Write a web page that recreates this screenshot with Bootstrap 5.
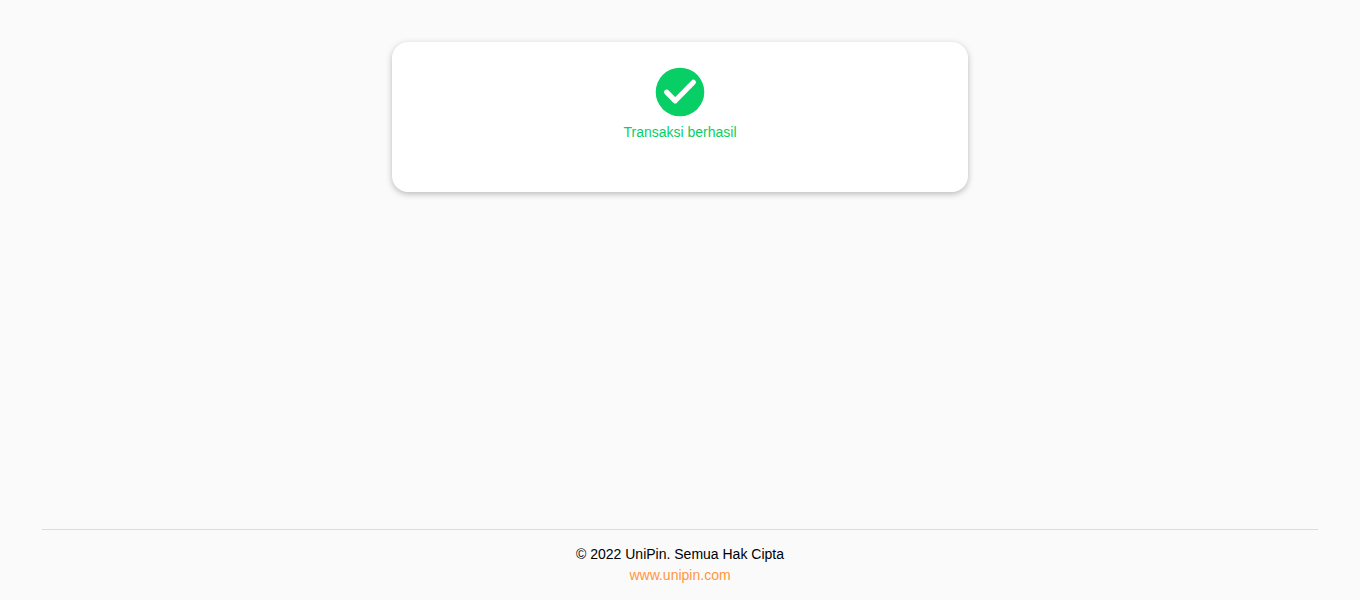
<!DOCTYPE html>
<html lang="id">
<head>
<meta charset="utf-8">
<meta name="viewport" content="width=device-width, initial-scale=1">
<title>UniPin</title>
<link href="https://cdn.jsdelivr.net/npm/bootstrap@5.3.0/dist/css/bootstrap.min.css" rel="stylesheet">
<style>
body { background: #fafafa; color: #000; font: 14px/21px "Liberation Sans", Arial, sans-serif; }
main { padding-top: 42px; }
.result-card { max-width: 576px; min-height: 150px; padding: 20px 16px; border-radius: 16px; box-shadow: 0 2px 6px rgba(0,0,0,.26); }
.result-icon { width: 60px; height: 60px; }
.result-text { color: #07ce65; }
.page-footer { margin: 0 42px; padding: 14px 0; border-top: 1px solid #dcdcdc; }
.site-link { color: #ff9640; }
</style>
</head>
<body class="d-flex flex-column min-vh-100">
<main class="flex-grow-1">
  <section class="result-card w-100 mx-auto bg-white d-flex flex-column align-items-center text-center">
    <svg class="result-icon" viewBox="0 0 60 60" aria-hidden="true">
      <circle cx="30" cy="30" r="24.3" fill="#07ce65"/>
      <path d="M16.600 30.700 25.200 39.300 43.400 20.800" transform="translate(0 -.5)" fill="none" stroke="#fff" stroke-width="5.200" stroke-linecap="round" stroke-linejoin="round"/>
    </svg>
    <p class="result-text mb-0">Transaksi berhasil</p>
  </section>
</main>
<footer class="page-footer text-center">
  <p class="mb-0">© 2022 UniPin. Semua Hak Cipta</p>
  <a class="site-link text-decoration-none d-block" href="#">www.unipin.com</a>
</footer>
<script src="https://cdn.jsdelivr.net/npm/bootstrap@5.3.0/dist/js/bootstrap.bundle.min.js"></script>
</body>
</html>
